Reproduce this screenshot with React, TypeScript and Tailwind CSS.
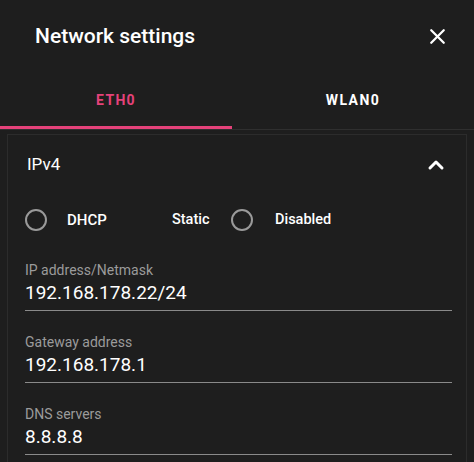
import { X, ChevronUp } from "lucide-react";

const fields = [
  { label: "IP address/Netmask", value: "192.168.178.22/24" },
  { label: "Gateway address", value: "192.168.178.1" },
  { label: "DNS servers", value: "8.8.8.8" },
];

function Radio() {
  return <div className="w-[22px] h-[22px] rounded-full border-2 border-[#9a9a9a] shrink-0" />;
}

export default function App() {
  return (
    <div
      className="w-[474px] h-[462px] bg-[#1e1e1e] overflow-hidden text-white"
      style={{ fontFamily: "Roboto, 'Liberation Sans', sans-serif" }}
    >
      {/* Header */}
      <div className="h-[72px] flex items-center justify-between pl-[35px] pr-[24px]">
        <h1 className="text-[21px] font-medium leading-none">Network settings</h1>
        <X className="w-[25px] h-[25px]" strokeWidth={2.2} />
      </div>

      {/* Tabs */}
      <div className="flex border-b border-[#2f2f2f]">
        <div className="w-[232px] h-[57px] flex items-center justify-center relative">
          <span className="text-[14px] font-bold tracking-[1.3px] text-[#e5427a]">ETH0</span>
          <div className="absolute left-0 right-0 bottom-0 h-[3px] bg-[#e5427a]" />
        </div>
        <div className="flex-1 h-[57px] flex items-center justify-center">
          <span className="text-[14px] font-bold tracking-[1.4px] text-white">WLAN0</span>
        </div>
      </div>

      {/* Card */}
      <div className="mt-[4px] mx-[7px] border border-[#2c2c2c] bg-[#1e1e1e]">
        <div className="h-[60px] flex items-center justify-between pl-[19px] pr-[18px]">
          <span className="text-[17px]">IPv4</span>
          <ChevronUp className="w-[24px] h-[24px]" strokeWidth={3} />
        </div>

        <div className="pl-[17px] pr-[14px]">
          <div className="flex items-center h-[22px] text-[14.5px] font-medium mt-[14px]">
            <div className="w-[147px] flex items-center">
              <Radio />
              <span className="ml-[20px] text-[15px]">DHCP</span>
            </div>
            <span className="w-[59px]">Static</span>
            <Radio />
            <span className="ml-[22px]">Disabled</span>
          </div>

          <div className="mt-[31px]">
            {fields.map((f) => (
              <div key={f.label} className="border-b border-[#8a8a8a] pb-[5px] mb-[23px]">
                <div className="text-[14px] leading-[17px] text-[#9b9b9b]">{f.label}</div>
                <div className="text-[19px] leading-[24px] mt-[2px]">{f.value}</div>
              </div>
            ))}
          </div>
        </div>
      </div>
    </div>
  );
}
